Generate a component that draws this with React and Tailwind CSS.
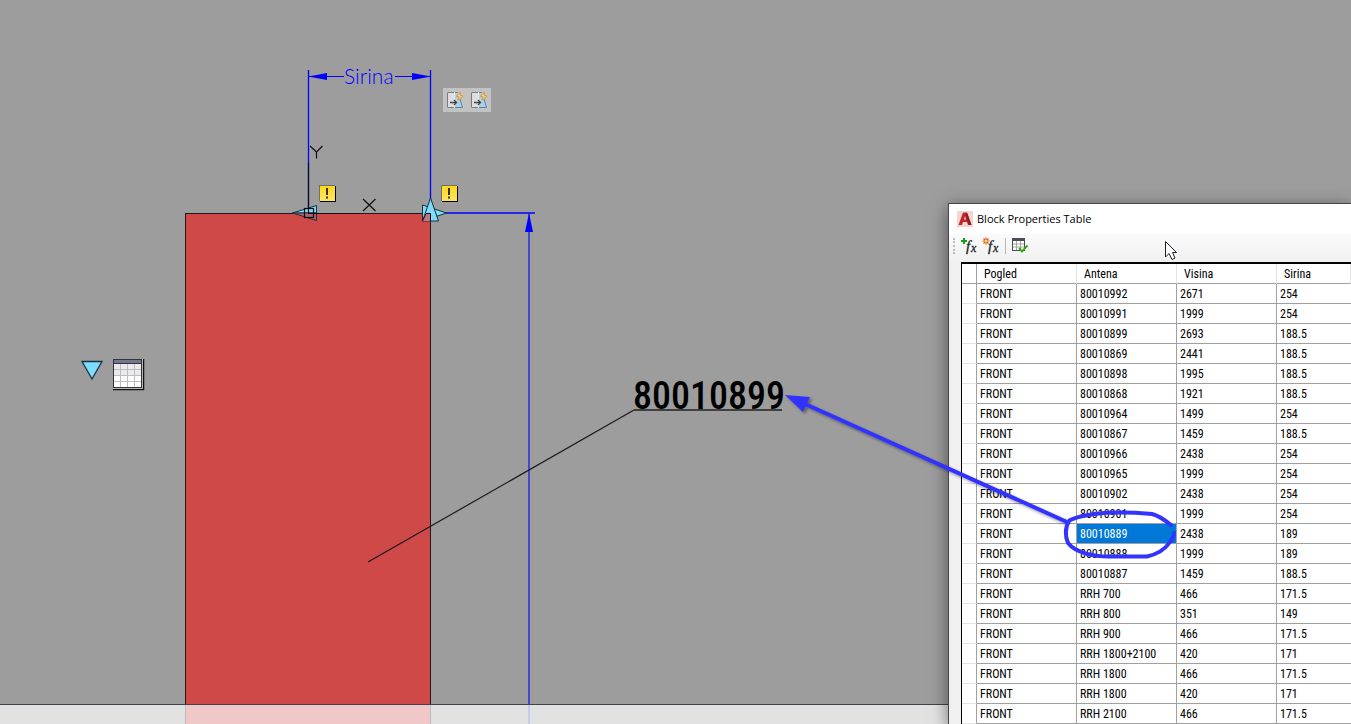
import React, { useState } from "react";

const columns = ["Pogled", "Antena", "Visina", "Sirina"];

const antennas = [
  ["FRONT", "80010992", "2671", "254"],
  ["FRONT", "80010991", "1999", "254"],
  ["FRONT", "80010899", "2693", "188.5"],
  ["FRONT", "80010869", "2441", "188.5"],
  ["FRONT", "80010898", "1995", "188.5"],
  ["FRONT", "80010868", "1921", "188.5"],
  ["FRONT", "80010964", "1499", "254"],
  ["FRONT", "80010867", "1459", "188.5"],
  ["FRONT", "80010966", "2438", "254"],
  ["FRONT", "80010965", "1999", "254"],
  ["FRONT", "80010902", "2438", "254"],
  ["FRONT", "80010901", "1999", "254"],
  ["FRONT", "80010889", "2438", "189"],
  ["FRONT", "80010888", "1999", "189"],
  ["FRONT", "80010887", "1459", "188.5"],
  ["FRONT", "RRH 700", "466", "171.5"],
  ["FRONT", "RRH 800", "351", "149"],
  ["FRONT", "RRH 900", "466", "171.5"],
  ["FRONT", "RRH 1800+2100", "420", "171"],
  ["FRONT", "RRH 1800", "466", "171.5"],
  ["FRONT", "RRH 1800", "420", "171"],
  ["FRONT", "RRH 2100", "466", "171.5"],
];

const Drawing = () => (
  <svg className="absolute inset-0 w-full h-full" aria-hidden="true">
    {/* Antenna body */}
    <rect x="185.5" y="213.5" width="245" height="2000" fill="#d04949" stroke="#1a1a1a" />

    {/* Width dimension */}
    <g stroke="#0000ff" fill="#0000ff">
      <path d="M308.5 70V213M430.5 70V213" strokeWidth="1.3" />
      <path d="M309 76.5H344M395 76.5H430" />
      <path d="M308 76.5L327 73V80ZM431 76.5L412 73V80Z" stroke="none" />
      <path d="M431 213H535" strokeWidth="1.5" />
      <path d="M529 214V2000" stroke="#2d2de0" strokeWidth="1.5" />
      <path d="M529 213L525 232H533Z" stroke="none" />
    </g>
    <text x="344" y="84" fontSize="21" fontWeight="300" fill="#0000ff" className="font-[Lato,sans-serif]">
      Sirina
    </text>

    {/* Grips */}
    <g stroke="#16323c">
      <path d="M292.5 213L316.5 205.5V213Z" fill="#7fdcff" />
      <path d="M292.5 213L316.5 220.5V213Z" fill="#b5616b" />
      <path d="M422.5 205V221L446.5 213Z" fill="#7fdcff" />
      <path d="M430.5 198L422.5 221H438.5Z" fill="#7fdcff" />
      <path d="M424 216L426 213.5H430.5V221H422.5Z" fill="#c17585" stroke="none" />
      <path d="M422.5 221L426 213.5H430.5V221" fill="none" stroke="#101010" />
      <path d="M82 361.5H102L92 379Z" fill="#7fdcff" strokeWidth="1.3" />
    </g>

    {/* UCS icon */}
    <g stroke="#101010" fill="none" strokeWidth="1.2">
      <path d="M308.5 163V213.5H359" />
      <rect x="304.5" y="208.5" width="9" height="9" />
      <path d="M310 146L316.5 152L322.5 146M316.5 152V158.5" />
      <path d="M363 199L375.5 211M375.5 199L363 211" />
    </g>

    {/* Leader */}
    <path d="M368 562L634 410" stroke="#1a1a1a" strokeWidth="1.2" />
    <path d="M634 410H782" stroke="#404040" strokeWidth="2" />
    <text x="633" y="409" fontSize="38" fontWeight="500" className="font-['Roboto_Condensed',Roboto,sans-serif]">
      80010899
    </text>
  </svg>
);

const Markup = () => (
  <svg className="absolute inset-0 w-full h-full pointer-events-none" aria-hidden="true">
    <defs>
      <filter id="markup-shadow">
        <feDropShadow dx="2" dy="2" stdDeviation="1.5" floodColor="#000" floodOpacity="0.4" />
      </filter>
    </defs>
    <g stroke="#3333ff" fill="none" filter="url(#markup-shadow)">
      <path d="M803 403L1067 522" strokeWidth="4" />
      <path d="M785 395L810 397L803 412Z" fill="#3333ff" stroke="none" />
    </g>
    <path
      d="M1171 525C1166 521 1160 516 1152 514C1128 512 1110 512 1094 514C1082 516 1072 518 1069 521C1065 527 1065 537 1068 543C1075 552 1092 557 1112 556.5H1147C1158 554 1166 548 1170 542C1173 538 1174 535 1174 533"
      stroke="#3333ff"
      strokeWidth="4"
      fill="none"
      strokeLinecap="round"
      strokeLinejoin="round"
    />
    <path
      d="M1165.5 241.5V257L1169 253.5L1172 259.5L1175 258L1172.5 252.5H1176.5Z"
      fill="#fff"
      stroke="#1e1e28"
    />
  </svg>
);

const ConstraintIcon = () => (
  <svg className="w-4 h-4" viewBox="0 0 16 16" aria-hidden="true">
    <path d="M0 0H7V16H0Z" fill="#dedede" />
    <path d="M7 0.5H0.5V15.5H7" fill="none" stroke="#7b7b7b" />
    <path d="M8 1H12L15 15H8Z" fill="#b4cfdf" />
    <path d="M8 0.5H11M13 7L15.5 15.5H8" stroke="#4e86b5" fill="none" />
    <path d="M7.5 0V16" stroke="#eee" />
    <path d="M3 10.5H9.5M7 8L9.5 10.5L7 13" stroke="#444" fill="none" strokeWidth="1.3" />
    <path d="M14 0L9 4L12 5L11 8L16 4L13 3Z" fill="#f9cf85" stroke="#d99532" strokeWidth="0.9" />
  </svg>
);

const WarningMark = ({ className, label }) => (
  <button
    type="button"
    aria-label={label}
    className={`absolute w-4 h-4 bg-linear-to-b from-[#ffd800] to-[#ffe75c] border-b border-r border-black shadow-[-1px_-1px_0_#6e6e6e] ${className}`}
  >
    <svg className="w-full h-full" viewBox="0 0 15 15" aria-hidden="true">
      <path d="M7 2V9M7 10.5V12.5" stroke="#303030" strokeWidth="2" />
    </svg>
  </button>
);

const LookupIcon = () => (
  <svg className="w-8 h-8" viewBox="0 0 32 32" aria-hidden="true">
    <path d="M29.5 0V30M0 29.5H30" stroke="#eee" />
    <path d="M0 30.5H31M30.5 0V31" stroke="#111" strokeWidth="1.5" />
    <rect x="0" y="0" width="29" height="29" fill="#fff" />
    <rect x="1" y="5" width="27" height="12" fill="#e9e9ee" />
    <rect x="0.5" y="0.5" width="28" height="28" fill="none" stroke="#33343c" />
    <rect x="1" y="1" width="27" height="3" fill="#73788c" />
    <path d="M1 4.5H28" stroke="#33343c" />
    <path d="M1 10.5H28M1 16.5H28M1 22.5H28M7.5 5V28M14.5 5V28M21.5 5V28" stroke="#bdbdbd" />
  </svg>
);

const FxIcon = ({ isNew }) => (
  <svg className="w-4 h-4 overflow-visible" viewBox="0 0 16 16" aria-hidden="true">
    {isNew ? (
      <g stroke="#e0562b" fill="none">
        <path d="M3 -0.500V6.500M-0.500 3H6.500M0.500 0.500L5.500 5.500M5.500 0.500L0.500 5.500" strokeWidth="1.2" />
        <circle cx="3" cy="3" r="1.5" fill="#ffe34d" stroke="none" />
      </g>
    ) : (
      <path d="M3 0V6M0 3H6" stroke="#12a012" strokeWidth="2" />
    )}
    <text x="5" y="13" fontSize="15" fill="#222" stroke="#222" strokeWidth="0.3" className="italic font-['Liberation_Serif',serif]">
      f
    </text>
    <text x="10" y="14" fontSize="12" fill="#222" stroke="#222" strokeWidth="0.3" className="italic font-['Liberation_Serif',serif]">
      x
    </text>
  </svg>
);

const AuditIcon = () => (
  <svg className="w-4 h-4 overflow-visible" viewBox="0 0 16 16" aria-hidden="true">
    <rect x="0.5" y="0.5" width="12" height="12" fill="#fff" stroke="#4a4c58" />
    <rect x="0" y="0" width="13" height="3" fill="#4a4c58" />
    <path d="M1 6H12M1 9H12M4.5 3V12M8.5 3V12" stroke="#a5a5a5" />
    <path d="M7 10L10 13.5L15.5 7.5" stroke="#3da817" fill="none" strokeWidth="2" />
  </svg>
);

const AutocadLogo = () => (
  <svg className="w-4 h-4" viewBox="0 0 16 16" aria-hidden="true">
    <rect width="16" height="16" fill="#f4d6d0" />
    <path d="M1.5 14L6 1.5H10L14.5 14H11L10 11H6L5 14Z" fill="#c2272d" />
    <path d="M7 8.5L8 5L9 8.5Z" fill="#f4d6d0" />
    <path d="M10 1.5L14.5 14H12L8.5 4Z" fill="#8f1c22" />
  </svg>
);

const BlockPropertiesTable = () => {
  const [selected, setSelected] = useState({ row: 12, col: 1 });

  return (
    <section className="absolute left-[948px] top-[203px] right-0 bottom-0 flex flex-col overflow-hidden bg-[#f0f0f0] border-l border-t border-[#474747] shadow-[0_4px_16px_rgba(0,0,0,0.5)]">
      <header className="flex items-center gap-1 h-[30px] shrink-0 px-2 bg-white">
        <AutocadLogo />
        <h1 className="text-[11px] leading-4 text-black whitespace-nowrap font-['Open_Sans',sans-serif]">
          Block Properties Table
        </h1>
      </header>

      <div className="flex items-center gap-1.5 h-7 shrink-0 pl-1 pb-1 bg-linear-to-b from-[#fbfbfb] to-[#f0f0f0]">
        <span className="h-4 border-l-2 border-dotted border-[#bdbdbd]"></span>
        <button type="button" aria-label="Add parameters">
          <FxIcon />
        </button>
        <button type="button" aria-label="New parameter">
          <FxIcon isNew />
        </button>
        <span className="h-4 border-l border-[#b5b5b5]"></span>
        <button type="button" aria-label="Audit table">
          <AuditIcon />
        </button>
      </div>

      <div className="flex-1 min-h-0 ml-3 overflow-hidden bg-white border-l border-t-2 border-black">
        <table className="w-full table-fixed border-separate border-spacing-0 text-[12px] leading-4 text-black font-['Roboto_Condensed',Roboto,sans-serif]">
          <colgroup>
            <col className="w-[15px]" />
            <col className="w-[100px]" />
            <col className="w-[100px]" />
            <col className="w-[100px]" />
            <col />
          </colgroup>
          <thead>
            <tr className="h-5">
              <th className="p-0 border-r border-b border-[#a0a0a0]"></th>
              {columns.map((name) => (
                <th
                  key={name}
                  scope="col"
                  className="py-0 px-[7px] text-left font-normal border-r border-b border-r-[#e5e5e5] border-b-[#a0a0a0]"
                >
                  {name}
                </th>
              ))}
            </tr>
          </thead>
          <tbody>
            {antennas.map((antenna, row) => (
              <tr key={row} className="h-5">
                <td className="p-0 border-r border-b border-r-[#a0a0a0] border-b-[#e3e3e3]"></td>
                {antenna.map((value, col) => (
                  <td
                    key={col}
                    onClick={() => setSelected({ row, col })}
                    className={`py-0 px-[3px] whitespace-nowrap border-b border-[#a0a0a0] ${
                      col < 3 ? "border-r" : ""
                    } ${
                      selected.row === row && selected.col === col
                        ? "bg-[#0078d7] text-white"
                        : ""
                    }`}
                  >
                    {value}
                  </td>
                ))}
              </tr>
            ))}
          </tbody>
        </table>
      </div>
    </section>
  );
};

const App = () => {
  return (
    <main className="relative h-screen overflow-hidden bg-[#9d9d9d]">
      <Drawing />

      <div className="absolute left-[443px] top-[88px] flex items-center gap-2 h-6 px-1 bg-[#c3c3c3]">
        <button type="button" aria-label="Horizontal constraint">
          <ConstraintIcon />
        </button>
        <button type="button" aria-label="Vertical constraint">
          <ConstraintIcon />
        </button>
      </div>

      <WarningMark className="left-[320px] top-[186px]" label="Missing width action" />
      <WarningMark className="left-[442px] top-[186px]" label="Missing height action" />

      <button type="button" aria-label="Block table" className="absolute left-[113px] top-[359px]">
        <LookupIcon />
      </button>

      {/* Command line */}
      <div className="absolute inset-x-0 bottom-0 h-5 bg-white/70 border-t border-[#40454d]"></div>

      <BlockPropertiesTable />
      <Markup />
    </main>
  );
};

export default App;
